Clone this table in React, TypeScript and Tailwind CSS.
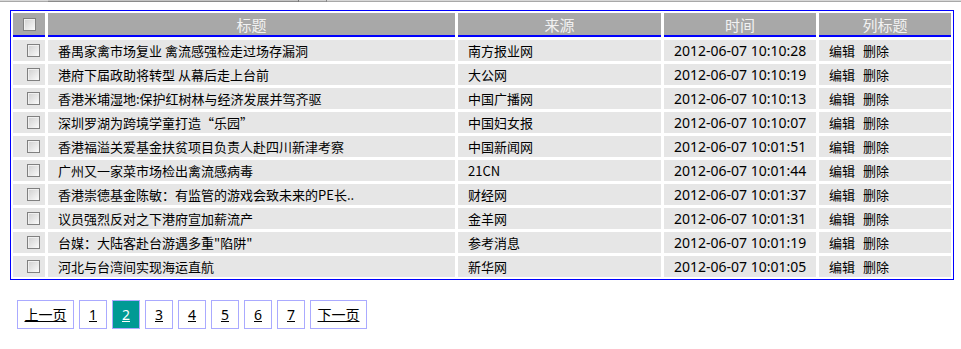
import React from "react";

const rows: [string, string, string][] = [
  ["番禺家禽市场复业 禽流感强检走过场存漏洞", "南方报业网", "2012-06-07 10:10:28"],
  ["港府下届政助将转型 从幕后走上台前", "大公网", "2012-06-07 10:10:19"],
  ["香港米埔湿地:保护红树林与经济发展并驾齐驱", "中国广播网", "2012-06-07 10:10:13"],
  ["深圳罗湖为跨境学童打造“乐园”", "中国妇女报", "2012-06-07 10:10:07"],
  ["香港福溢关爱基金扶贫项目负责人赴四川新津考察", "中国新闻网", "2012-06-07 10:01:51"],
  ["广州又一家菜市场检出禽流感病毒", "21CN", "2012-06-07 10:01:44"],
  ["香港崇德基金陈敏：有监管的游戏会致未来的PE长..", "财经网", "2012-06-07 10:01:37"],
  ["议员强烈反对之下港府宣加薪流产", "金羊网", "2012-06-07 10:01:31"],
  ["台媒：大陆客赴台游遇多重\"陷阱\"", "参考消息", "2012-06-07 10:01:19"],
  ["河北与台湾间实现海运直航", "新华网", "2012-06-07 10:01:05"],
];

function Box() {
  return (
    <span className="block w-[13px] h-[13px] border border-[#808080] bg-linear-to-br from-[#cfcfcf] to-[#fbfbfb] shadow-[inset_1px_1px_0_#f0f0f0]" />
  );
}

const font = { fontFamily: '"Noto Sans CJK SC", "Noto Sans", sans-serif' };

export default function App() {
  const headCls =
    "h-[24px] bg-[#a8a8a8] border-b-2 border-[#0000ff] text-[#f2f2f2] text-[15px] flex items-center justify-center leading-none";
  const cellCls = "h-[21px] bg-[#e6e6e6] flex items-center pl-[10px] text-[13px] text-black leading-none whitespace-nowrap";
  const pages = ["1", "2", "3", "4", "5", "6", "7"];
  return (
    <div className="w-[961px] h-[349px] bg-white overflow-hidden" style={font}>
      <div className="flex h-[2px]">
        <div className="w-[48px] flex flex-col"><div className="h-px bg-[#d8d8d8]" /><div className="h-px bg-[#a8a8a8]" /></div>
        <div className="w-[250px] flex flex-col"><div className="h-px bg-[#c4c4c4]" /><div className="h-px bg-[#8a8a8a]" /></div>
        <div className="w-px bg-[#777]" />
        <div className="w-[27px] flex flex-col"><div className="h-px bg-[#d0d0d0]" /><div className="h-px bg-[#999]" /></div>
        <div className="w-px bg-[#888]" />
        <div className="flex-1 flex flex-col"><div className="h-px bg-[#d8d8d8]" /><div className="h-px bg-[#a8a8a8]" /></div>
      </div>
      <div className="ml-[10px] mt-[8px] w-[944px] border border-[#0000ff] p-[2px] grid grid-cols-[32px_407px_203px_152px_132px] gap-[3px]">
        <div className={headCls}><Box /></div>
        <div className={headCls}>标题</div>
        <div className={headCls}>来源</div>
        <div className={headCls}>时间</div>
        <div className={headCls}>列标题</div>
        {rows.map(([t, s, d], i) => (
          <React.Fragment key={i}>
            <div className="h-[21px] bg-[#e6e6e6] flex items-center pl-[14px]"><Box /></div>
            <div className={cellCls}>{t}</div>
            <div className={cellCls}>{s}</div>
            <div className={cellCls + " text-[14px]"} style={{ fontFamily: '"Noto Sans", "Noto Sans CJK SC", sans-serif' }}>{d}</div>
            <div className={cellCls + " gap-[8px]"}><span>编辑</span><span>删除</span></div>
          </React.Fragment>
        ))}
      </div>
      <div className="flex gap-[5px] ml-[17px] mt-[20px] text-[14px] text-black">
        <a className="w-[57px] h-[29px] border border-[#aaaaff] flex items-center justify-center underline">上一页</a>
        {pages.map((p) => (
          <a
            key={p}
            className={
              "w-[28px] h-[29px] border border-[#aaaaff] flex items-center justify-center underline " +
              (p === "2" ? "bg-[#009a94] text-white" : "")
            }
            style={{ fontFamily: '"Noto Sans", sans-serif' }}
          >
            {p}
          </a>
        ))}
        <a className="w-[57px] h-[29px] border border-[#aaaaff] flex items-center justify-center underline">下一页</a>
      </div>
    </div>
  );
}
